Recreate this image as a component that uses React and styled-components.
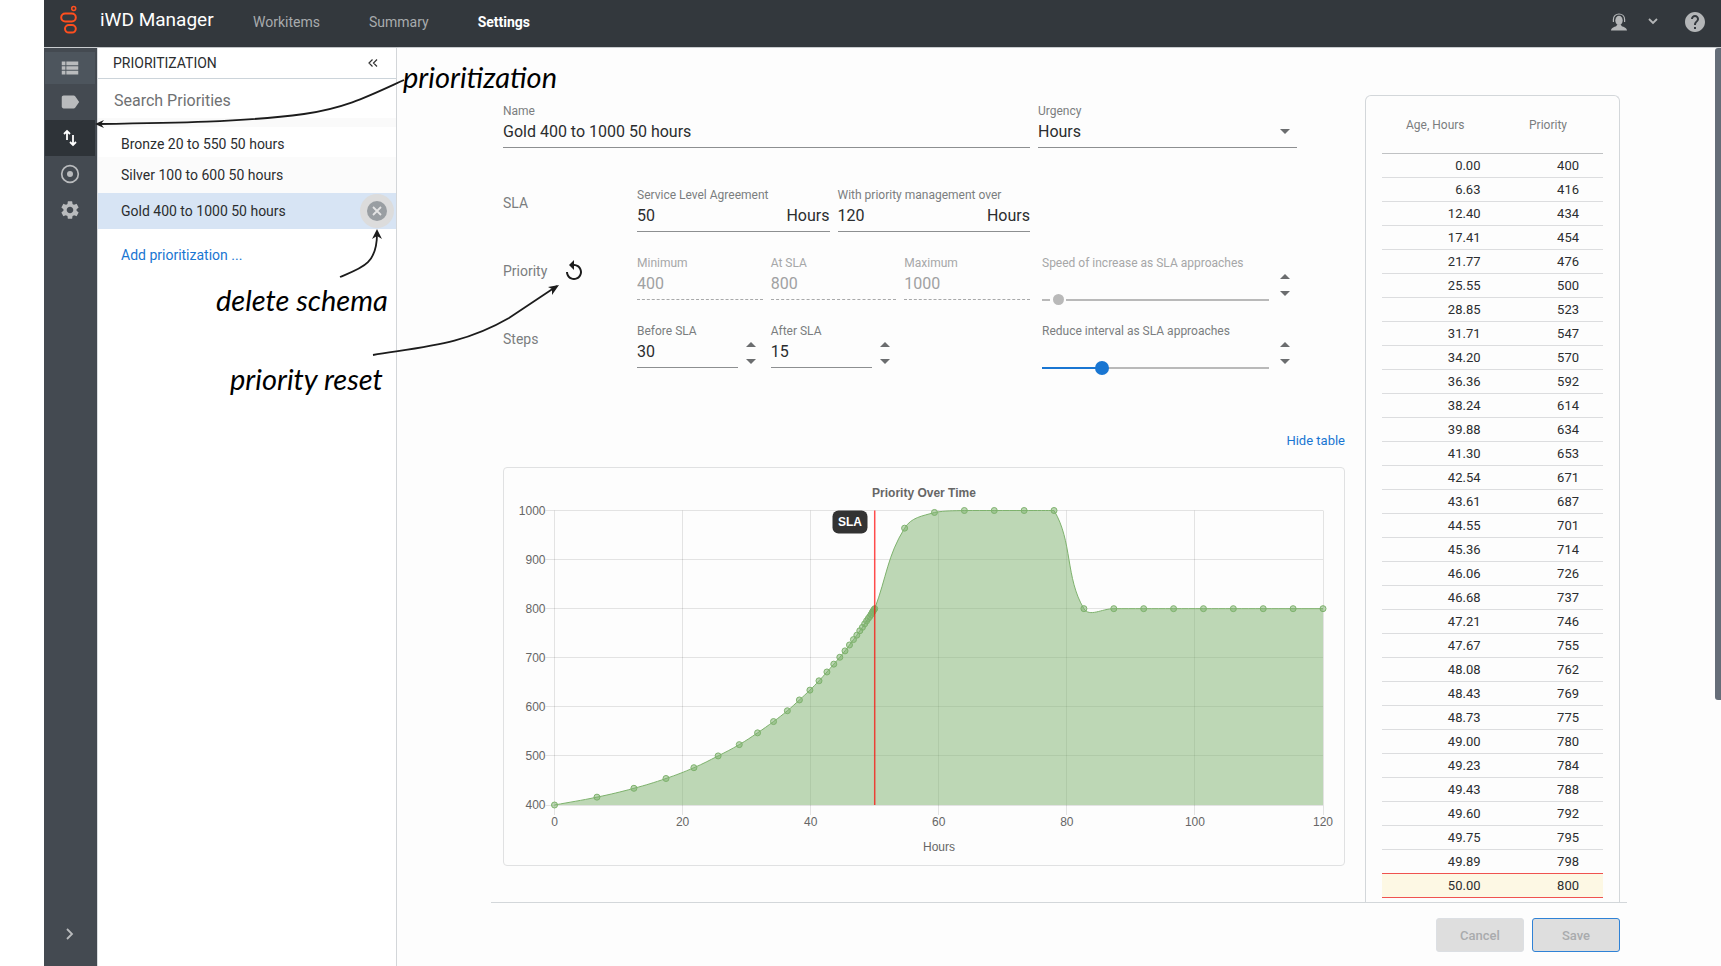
import React from 'react';
import styled, { createGlobalStyle, css } from 'styled-components';
import { MdViewList, MdLabel, MdSettings, MdHelp, MdReplay } from 'react-icons/md';

const GlobalStyle = createGlobalStyle`
  *, *::before, *::after { box-sizing: border-box; }
  body { margin: 0; background: #fff; font-family: Roboto, "Liberation Sans", sans-serif; font-size: 14px; color: #2b2d2f; }
  button, input, select { font: inherit; color: inherit; margin: 0; padding: 0; border: 0; background: none; border-radius: 0; outline: 0; }
`;

const Page = styled.div`
  position: relative;
  display: flex;
  flex-direction: column;
  min-height: 100vh;
  margin-left: 44px;
`;

/* ---------- top bar ---------- */
const TopBar = styled.header`
  display: flex;
  align-items: center;
  height: 48px;
  padding: 0 14px 0 16px;
  background: #33383d;
  border-bottom: 1px solid #c9cccf;
  color: #fff;
`;
const LogoSvg = styled.svg`
  flex: none;
  margin-bottom: 8px;
`;
const Brand = styled.h1`
  margin: 0 0 8px;
  width: 175px;
  padding-left: 22px;
  font-size: 19px;
  font-weight: 400;
  line-height: 24px;
  white-space: nowrap;
`;
const Nav = styled.nav`
  display: flex;
  flex: 1;
  gap: 49px;
  margin-bottom: 4px;
`;
const NavLink = styled.a`
  color: ${(p) => (p.$active ? '#fff' : '#a8abad')};
  font-weight: ${(p) => (p.$active ? 700 : 400)};
  text-decoration: none;
`;
const TopActions = styled.div`
  display: flex;
  align-items: center;
  color: #b4b6b8;
  margin-bottom: 4px;
`;
const MenuSlot = styled.div`
  margin-right: 8px;
`;
const IconButton = styled.button`
  display: flex;
  align-items: center;
  justify-content: center;
  width: ${(p) => p.$size}px;
  height: ${(p) => p.$size}px;
  cursor: pointer;
`;

const Body = styled.div`
  display: flex;
  flex: 1;
`;

/* ---------- icon rail ---------- */
const Rail = styled.nav`
  display: flex;
  flex-direction: column;
  width: 53px;
  padding: 4px 2px 14px 1px;
  background: #444a51;
`;
const RailItem = styled.button`
  display: flex;
  align-items: center;
  justify-content: center;
  height: ${(p) => (p.$first ? 32 : 36)}px;
  cursor: pointer;
  color: ${(p) => (p.$active ? '#fff' : '#b9bbbd')};
  background: ${(p) => (p.$active ? '#2e3338' : p.$first ? '#4d555d' : 'none')};
`;
const RailSpacer = styled.div`
  flex: 1;
`;

/* ---------- list panel ---------- */
const Panel = styled.aside`
  width: 300px;
  background: #fff;
  border-left: 1px solid #d9dcdf;
  border-right: 1px solid #d3d6d9;
  box-shadow: 1px 0 2px #0000001a;
`;
const PanelHead = styled.div`
  display: flex;
  align-items: center;
  justify-content: space-between;
  height: 31px;
  padding: 0 12px 0 15px;
  border-bottom: 1px solid #ccd4da;
`;
const PanelTitle = styled.h2`
  margin: 0;
  font-size: 14px;
  font-weight: 400;
`;
const Search = styled.input`
  display: block;
  width: 100%;
  height: 39px;
  padding: 4px 16px 0;
  font-size: 16px;
  &::placeholder { color: #6f7173; opacity: 1; }
`;
const List = styled.ul`
  margin: 0;
  padding: 4px 0 0;
  list-style: none;
  border-top: 9px solid #fafafa;
`;
const Item = styled.li`
  display: flex;
  align-items: center;
  justify-content: space-between;
  height: ${(p) => (p.$compact ? 26 : 36)}px;
  padding: 0 2px 0 23px;
  background: ${(p) => (p.$selected ? '#d7e4f4' : p.$shaded ? '#fbfbfb' : 'none')};
`;
const DeleteButton = styled.button`
  display: flex;
  align-items: center;
  justify-content: center;
  width: 34px;
  height: 34px;
  border-radius: 50%;
  background: #dcdcdc;
  cursor: pointer;
`;
const AddLink = styled.a`
  display: inline-block;
  margin: 17px 23px;
  line-height: 18px;
  color: #1976d2;
  text-decoration: none;
`;

/* ---------- main area ---------- */
const Main = styled.main`
  position: relative;
  display: flex;
  flex: 1;
  flex-direction: column;
  align-items: center;
  min-width: 0;
  background: #fdfdfd;
`;
const ScrollThumb = styled.div`
  position: absolute;
  top: 0;
  right: 0;
  width: 6px;
  height: 71%;
  border-radius: 3px 0 0 3px;
  background: #656d78;
`;
const Content = styled.div`
  display: flex;
  flex: 1;
  gap: 20px;
  width: 100%;
  max-width: 1136px;
  padding: 47px 7px 0 12px;
`;
const Editor = styled.form`
  flex: 1;
  min-width: 0;
  padding-top: 8px;
`;
const Row = styled.div`
  display: flex;
  align-items: flex-start;
  height: 45px;
  margin: 0 48px ${(p) => p.$after || 23}px 0;
`;
const RowLabel = styled.div`
  display: flex;
  align-items: center;
  gap: 15px;
  width: 134px;
  height: 31px;
  color: #7b7d7f;
`;
const Fields = styled.div`
  display: grid;
  flex: 1;
  grid-template-columns: ${(p) => p.$columns};
  gap: 8px;
`;
const SideCell = styled.div`
  display: flex;
  width: 267px;
  padding: 0 7px 0 12px;
  gap: 11px;
`;
const Field = styled.div`
  display: flex;
  flex-direction: column;
  width: ${(p) => p.$width || 'auto'};
  min-width: 0;
`;
const Label = styled.label`
  font-size: 12px;
  line-height: 16px;
  white-space: nowrap;
  color: ${(p) => (p.$muted ? '#a6a7a8' : '#7b7d7f')};
`;
const control = css`
  width: 100%;
  min-width: 0;
  font-size: 16px;
  color: #2b2d2f;
`;
const InputLine = styled.div`
  display: flex;
  align-items: center;
  height: 29px;
  padding-bottom: 4px;
  border-bottom: 1px ${(p) => (p.$muted ? 'dashed #a8a9aa' : 'solid #8d8f91')};
`;
const TextInput = styled.input`
  ${control}
  flex: 1;
  &:disabled { color: #a0a1a2; }
`;
const Unit = styled.span`
  font-size: 16px;
`;
const Select = styled.select`
  ${control}
  appearance: none;
`;
const SelectLine = styled(InputLine)`
  padding-right: 7px;
`;
const Stepped = styled.div`
  display: flex;
  gap: 8px;
`;
const StepperBox = styled.div`
  display: flex;
  flex-direction: column;
  gap: 12px;
  padding-top: 19px;
`;
const StepButton = styled.button`
  display: block;
  width: 10px;
  height: 5px;
  cursor: pointer;
`;
const SliderField = styled(Field)`
  flex: 1;
  gap: 21px;
`;
const track = css`
  height: 2px;
  background: ${(p) =>
    p.disabled
      ? 'linear-gradient(90deg, #b9b9b9 8px, #fdfdfd 8px, #fdfdfd 24px, #b9b9b9 24px)'
      : 'linear-gradient(90deg, #1976d2 26%, #b9b9b9 26%)'};
`;
const Range = styled.input`
  appearance: none;
  display: block;
  width: 100%;
  height: 16px;
  &::-webkit-slider-runnable-track { ${track} }
  &::-webkit-slider-thumb {
    appearance: none;
    width: ${(p) => (p.disabled ? 11 : 14)}px;
    height: ${(p) => (p.disabled ? 11 : 14)}px;
    margin-top: ${(p) => (p.disabled ? -5 : -6)}px;
    border-radius: 50%;
    background: ${(p) => (p.disabled ? '#b9b9b9' : '#1976d2')};
  }
`;
const TableToggle = styled.div`
  display: flex;
  justify-content: flex-end;
  margin: 65px 0 18px;
`;
const ToggleLink = styled.a`
  font-size: 13px;
  line-height: 16px;
  color: #1976d2;
  text-decoration: none;
`;
const ChartCard = styled.section`
  border: 1px solid #e0e1e2;
  border-radius: 4px;
`;
const ChartSvg = styled.svg`
  display: block;
  width: 100%;
  height: auto;
  font: 12px "Liberation Sans", sans-serif;
`;

/* ---------- value table ---------- */
const TableCard = styled.section`
  width: 255px;
  padding: 0 16px 4px;
  border: 1px solid #d3d7da;
  border-bottom: 0;
  border-radius: 6px 6px 0 0;
`;
const Table = styled.table`
  width: 100%;
  border-spacing: 0;
  table-layout: fixed;
  text-align: right;
`;
const Th = styled.th`
  height: 58px;
  padding: 0 ${(p) => p.$end}px 0 0;
  border-bottom: 1px solid #c0c2c4;
  font-size: 12px;
  font-weight: 400;
  color: #7b7d7f;
`;
const Td = styled.td`
  height: 24px;
  padding: 0 ${(p) => p.$end}px 0 0;
  border-bottom: 1px solid ${(p) => (p.$red ? '#ef5350' : '#dcdddf')};
  background: ${(p) => (p.$mark ? '#fdf8e4' : 'none')};
  font-size: 13px;
  line-height: 16px;
`;

/* ---------- footer ---------- */
const Footer = styled.footer`
  display: flex;
  justify-content: flex-end;
  gap: 8px;
  width: 100%;
  max-width: 1136px;
  height: 64px;
  padding: 15px 7px 0 0;
  border-top: 1px solid #d3d7da;
`;
const FormButton = styled.button`
  width: 88px;
  height: 34px;
  border: 1px solid ${(p) => (p.$primary ? '#2f82d6' : '#dcdfe3')};
  border-radius: 3px;
  background: #dedede;
  font-size: 13px;
  font-weight: 500;
  color: #a9abad;
`;

/* ---------- annotations ---------- */
const Notes = styled.svg`
  position: absolute;
  top: 0;
  left: 0;
  pointer-events: none;
  overflow: visible;
  font: italic 29px Lato, sans-serif;
`;

const Logo = () => (
  <LogoSvg width="18" height="29" viewBox="0 0 18 29" fill="none" stroke="#ff4f1f" strokeWidth="2" aria-hidden="true">
    <rect x="1.2" y="8.5" width="14.6" height="8" rx="4" />
    <rect x="5" y="20" width="10.8" height="7.6" rx="3.8" />
    <circle cx="13.7" cy="3.5" r="2" strokeWidth="1.5" />
  </LogoSvg>
);
const AgentIcon = () => (
  <svg width="18" height="18" viewBox="0 0 18 18" fill="currentColor" aria-hidden="true">
    <ellipse cx="9" cy="7.4" rx="3.7" ry="4.6" />
    <path d="M3.4 9V6.4C3.4 3 6 1 9 1s5.6 2 5.6 5.4V9" fill="none" stroke="currentColor" strokeWidth="1.2" />
    <path d="M1 17.5c0-2.5 3-3.500 5.500-4.500L7 11.500h4l.5 1.500c2.500 1 5.500 2 5.500 4.500z" />
  </svg>
);
const SwapIcon = () => (
  <svg width="14" height="18" viewBox="0 0 14 18" fill="none" stroke="currentColor" strokeWidth="1.8" aria-hidden="true">
    <path d="M4 11V2M1 5l3-3 3 3M10 6v10M7 13l3 3 3-3" />
  </svg>
);
const TargetIcon = () => (
  <svg width="20" height="20" viewBox="0 0 20 20" aria-hidden="true">
    <circle cx="10" cy="10" r="8.3" fill="none" stroke="currentColor" strokeWidth="1.7" />
    <circle cx="10" cy="10" r="3" fill="currentColor" />
  </svg>
);
const Chevron = ({ d, width, height }) => (
  <svg width={width} height={height} fill="none" stroke="currentColor" strokeWidth="1.8" aria-hidden="true">
    <path d={d} />
  </svg>
);
const TriangleSvg = styled.svg`
  display: block;
  flex: none;
`;
const Triangle = ({ down }) => (
  <TriangleSvg width="10" height="5" viewBox="0 0 10 5" fill="#6b6d6f" aria-hidden="true">
    <path d={down ? 'M0 0h10L5 5z' : 'M0 5h10L5 0z'} />
  </TriangleSvg>
);

const Stepper = ({ name }) => (
  <StepperBox>
    <StepButton type="button" aria-label={`Increase ${name}`}><Triangle /></StepButton>
    <StepButton type="button" aria-label={`Decrease ${name}`}><Triangle down /></StepButton>
  </StepperBox>
);

const TextField = ({ id, label, value, unit, muted, width }) => (
  <Field $width={width}>
    <Label htmlFor={id} $muted={muted}>{label}</Label>
    <InputLine $muted={muted}>
      <TextInput id={id} defaultValue={value} disabled={muted} />
      {unit && <Unit>{unit}</Unit>}
    </InputLine>
  </Field>
);

const before = [
  [0, 400], [6.63, 416], [12.4, 434], [17.41, 454], [21.77, 476], [25.55, 500], [28.85, 523], [31.71, 547],
  [34.2, 570], [36.36, 592], [38.24, 614], [39.88, 634], [41.3, 653], [42.54, 671], [43.61, 687], [44.55, 701],
  [45.36, 714], [46.06, 726], [46.68, 737], [47.21, 746], [47.67, 755], [48.08, 762], [48.43, 769], [48.73, 775],
  [49, 780], [49.23, 784], [49.43, 788], [49.6, 792], [49.75, 795], [49.89, 798], [50, 800],
];
const after = Array.from({ length: 15 }, (_, i) => {
  const value = i === 0 ? 964 : i === 1 ? 996 : i < 6 ? 1000 : 800;
  return [50 + ((i + 1) * 70) / 15, value];
});

const LEFT = 50.5;
const RIGHT = 819;
const TOP = 42.5;
const BOTTOM = 337;
const px = (h) => LEFT + ((RIGHT - LEFT) * h) / 120;
const py = (v) => BOTTOM - ((BOTTOM - TOP) * (v - 400)) / 600;
const points = [...before, ...after].map(([h, v]) => [px(h), py(v)]);

// Smoothed line: cubic segments with tension 0.4, handles kept inside the plot.
const smoothPath = (pts) => {
  const clamp = (y) => Math.min(BOTTOM, Math.max(TOP, y));
  const handles = pts.map((cur, i) => {
    const prev = pts[i - 1] || cur;
    const next = pts[i + 1] || cur;
    const a = Math.hypot(cur[0] - prev[0], cur[1] - prev[1]);
    const b = Math.hypot(next[0] - cur[0], next[1] - cur[1]);
    const fa = (0.4 * a) / (a + b);
    const fb = (0.4 * b) / (a + b);
    const dx = next[0] - prev[0];
    const dy = next[1] - prev[1];
    return [[cur[0] - fa * dx, clamp(cur[1] - fa * dy)], [cur[0] + fb * dx, clamp(cur[1] + fb * dy)]];
  });
  return pts
    .map((p, i) => (i === 0 ? `M${p}` : `C${handles[i - 1][1]} ${handles[i][0]} ${p}`))
    .join(' ');
};
const line = smoothPath(points);

const Chart = () => (
  <ChartSvg viewBox="0 0 840 397" role="img" aria-label="Priority Over Time">
    <g stroke="#000" strokeOpacity="0.1">
      {[400, 500, 600, 700, 800, 900, 1000].map((v) => (
        <path key={v} d={`M${LEFT - 9} ${Math.round(py(v) - 0.5) + 0.5}H${RIGHT}`} />
      ))}
      {[0, 20, 40, 60, 80, 100, 120].map((h) => (
        <path key={h} d={`M${Math.round(px(h) - 0.5) + 0.5} ${TOP}V${BOTTOM + 10}`} />
      ))}
    </g>
    <path d={`${line}V${BOTTOM}H${LEFT}Z`} fill="#7eb26d" fillOpacity="0.5" />
    <path d={line} fill="none" stroke="#7eb26d" />
    <g fill="#7eb26d" fillOpacity="0.5" stroke="#7eb26d">
      {points.map(([x, y]) => <circle key={x} cx={x} cy={y} r="3" />)}
    </g>
    <path d={`M${px(50)} ${TOP}V${BOTTOM}`} stroke="#ff0000" strokeOpacity="0.7" strokeWidth="1.5" />
    <rect x="328.5" y="42.5" width="35" height="23" rx="6" fill="#333" />
    <text x="346" y="58" textAnchor="middle" fill="#fff" fontWeight="700">SLA</text>
    <g fill="#666">
      <text x="420" y="29" textAnchor="middle" fontWeight="700">Priority Over Time</text>
      {[400, 500, 600, 700, 800, 900, 1000].map((v) => (
        <text key={v} x={LEFT - 9} y={py(v) + 4} textAnchor="end">{v}</text>
      ))}
      {[0, 20, 40, 60, 80, 100, 120].map((h) => (
        <text key={h} x={px(h)} y={BOTTOM + 21} textAnchor="middle">{h}</text>
      ))}
      <text x="435" y="383" textAnchor="middle">Hours</text>
    </g>
  </ChartSvg>
);

const Annotations = () => (
  <Notes width="600" height="420" aria-label="Callouts">
    <g fill="none" stroke="#1c1c1c" strokeWidth="1.8">
      <path d="M360 80C325 96 302 108 260 114C200 122 130 123 54 124" />
      <path d="M296 277C318 268 333 264 333 234" />
      <path d="M329 355C385 346 420 344 465 318L513 286" />
    </g>
    <g fill="#1c1c1c">
      <path d="M51 124l9-4-3 4 3 4z" />
      <path d="M333 229l5 10-5-3-5 3z" />
      <path d="M515 285l-11 2 4 2 0 6z" />
    </g>
    <g fill="#000">
      <text x="359" y="88">prioritization</text>
      <text x="172" y="311">delete schema</text>
      <text x="186" y="390">priority reset</text>
    </g>
  </Notes>
);

export default function App() {
  return (
    <Page>
      <GlobalStyle />
      <TopBar>
        <Logo />
        <Brand>iWD Manager</Brand>
        <Nav>
          <NavLink href="#workitems">Workitems</NavLink>
          <NavLink href="#summary">Summary</NavLink>
          <NavLink href="#settings" $active>Settings</NavLink>
        </Nav>
        <TopActions>
          <IconButton $size={24} type="button" aria-label="Account"><AgentIcon /></IconButton>
          <MenuSlot>
            <IconButton $size={44} type="button" aria-label="Account menu">
              <Chevron width="10" height="7" d="M1 1l4 4 4-4" />
            </IconButton>
          </MenuSlot>
          <IconButton $size={24} type="button" aria-label="Help"><MdHelp size={24} /></IconButton>
        </TopActions>
      </TopBar>
      <Body>
        <Rail aria-label="Sections">
          <RailItem $first aria-label="Lists"><MdViewList size={22} /></RailItem>
          <RailItem aria-label="Labels"><MdLabel size={22} /></RailItem>
          <RailItem $active aria-label="Prioritization"><SwapIcon /></RailItem>
          <RailItem aria-label="Targets"><TargetIcon /></RailItem>
          <RailItem aria-label="Configuration"><MdSettings size={22} /></RailItem>
          <RailSpacer />
          <RailItem aria-label="Expand"><Chevron width="8" height="12" d="M1 1l5 5-5 5" /></RailItem>
        </Rail>
        <Panel>
          <PanelHead>
            <PanelTitle>PRIORITIZATION</PanelTitle>
            <IconButton $size={22} type="button" aria-label="Collapse panel">
              <svg width="10" height="8" fill="none" stroke="#333" strokeWidth="1.2" aria-hidden="true">
                <path d="M4.5 .5L1 4l3.500 3.500M9 .5L5.500 4 9 7.500" />
              </svg>
            </IconButton>
          </PanelHead>
          <Search type="text" placeholder="Search Priorities" aria-label="Search Priorities" />
          <List>
            <Item $compact>Bronze 20 to 550 50 hours</Item>
            <Item $shaded>Silver 100 to 600 50 hours</Item>
            <Item $selected>
              Gold 400 to 1000 50 hours
              <DeleteButton type="button" aria-label="Delete">
                <svg width="20" height="20" aria-hidden="true">
                  <circle cx="10" cy="10" r="10" fill="#999ea2" />
                  <path d="M6 6l8 8M14 6l-8 8" stroke="#e4e4e4" strokeWidth="1.8" />
                </svg>
              </DeleteButton>
            </Item>
          </List>
          <AddLink href="#add">Add prioritization ...</AddLink>
        </Panel>
        <Main>
          <Content>
            <Editor>
              <Row $after={39}>
                <Fields $columns="minmax(0, 1fr) 259px">
                  <TextField id="name" label="Name" value="Gold 400 to 1000 50 hours" />
                  <Field>
                    <Label htmlFor="urgency">Urgency</Label>
                    <SelectLine>
                      <Select id="urgency" defaultValue="Hours"><option>Hours</option></Select>
                      <Triangle down />
                    </SelectLine>
                  </Field>
                </Fields>
              </Row>
              <Row>
                <RowLabel>SLA</RowLabel>
                <Fields $columns="1fr 1fr">
                  <TextField id="sla" label="Service Level Agreement" value="50" unit="Hours" />
                  <TextField id="over" label="With priority management over" value="120" unit="Hours" />
                </Fields>
                <SideCell />
              </Row>
              <Row>
                <RowLabel>
                  Priority
                  <IconButton $size={24} type="button" aria-label="Reset priority"><MdReplay size={24} color="#1c1c1c" /></IconButton>
                </RowLabel>
                <Fields $columns="1fr 1fr 1fr">
                  <TextField id="min" label="Minimum" value="400" muted />
                  <TextField id="at" label="At SLA" value="800" muted />
                  <TextField id="max" label="Maximum" value="1000" muted />
                </Fields>
                <SideCell>
                  <SliderField>
                    <Label htmlFor="speed" $muted>Speed of increase as SLA approaches</Label>
                    <Range id="speed" type="range" defaultValue="5" disabled />
                  </SliderField>
                  <Stepper name="speed" />
                </SideCell>
              </Row>
              <Row>
                <RowLabel>Steps</RowLabel>
                <Fields $columns="1fr 1fr 1fr">
                  <Stepped>
                    <TextField id="before" label="Before SLA" value="30" width="101px" />
                    <Stepper name="steps before SLA" />
                  </Stepped>
                  <Stepped>
                    <TextField id="after" label="After SLA" value="15" width="101px" />
                    <Stepper name="steps after SLA" />
                  </Stepped>
                </Fields>
                <SideCell>
                  <SliderField>
                    <Label htmlFor="reduce">Reduce interval as SLA approaches</Label>
                    <Range id="reduce" type="range" defaultValue="25" />
                  </SliderField>
                  <Stepper name="reduction" />
                </SideCell>
              </Row>
              <TableToggle><ToggleLink href="#table">Hide table</ToggleLink></TableToggle>
              <ChartCard><Chart /></ChartCard>
            </Editor>
            <TableCard>
              <Table>
                <thead>
                  <tr><Th $end={28} scope="col">Age, Hours</Th><Th $end={36} scope="col">Priority</Th></tr>
                </thead>
                <tbody>
                  {before.map(([age, priority], i) => (
                    <tr key={age}>
                      <Td $end={12} $red={i > 28} $mark={i === 30}>{age.toFixed(2)}</Td>
                      <Td $end={24} $red={i > 28} $mark={i === 30}>{priority}</Td>
                    </tr>
                  ))}
                </tbody>
              </Table>
            </TableCard>
          </Content>
          <Footer>
            <FormButton type="button">Cancel</FormButton>
            <FormButton type="button" $primary>Save</FormButton>
          </Footer>
          <ScrollThumb />
        </Main>
      </Body>
      <Annotations />
    </Page>
  );
}
